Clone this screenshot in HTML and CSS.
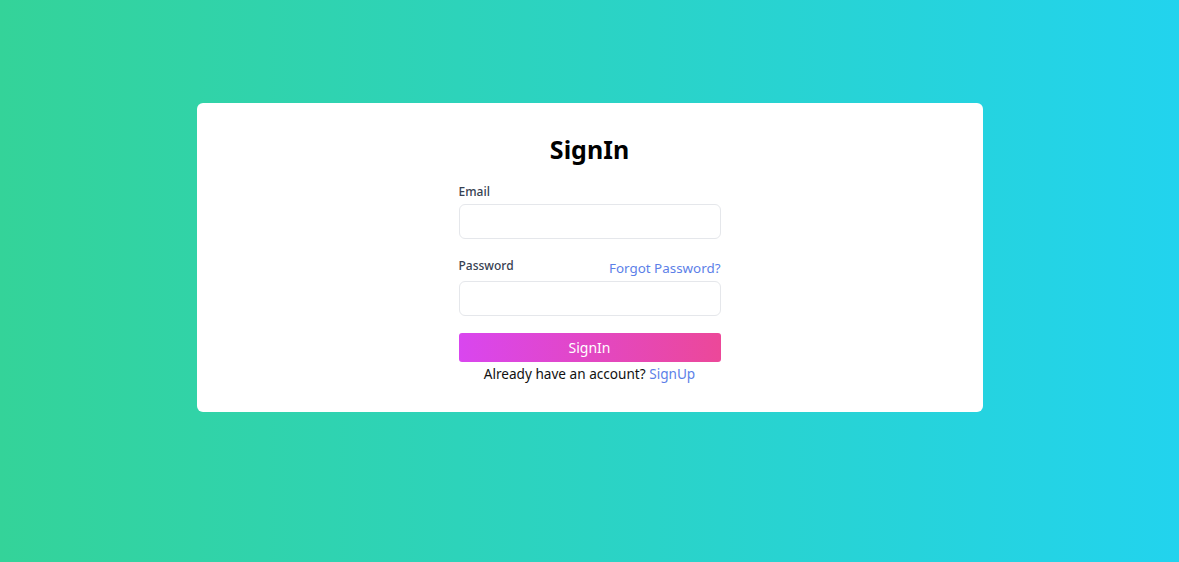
FILE: index.html
```html
<!DOCTYPE html>
<html lang="en">
<head>
<meta charset="utf-8">
<title>SignIn</title>
<link rel="stylesheet" href="styles.css">
</head>
<body>
<main class="page">
  <section class="card">
    <form class="form">
      <h1 class="title">SignIn</h1>
      <label class="label" for="email">Email</label>
      <input class="input" id="email" type="email">
      <div class="row">
        <label class="label" for="password">Password</label>
        <a class="link forgot" href="#">Forgot Password?</a>
      </div>
      <input class="input" id="password" type="password">
      <button class="btn" type="button">SignIn</button>
      <p class="foot">Already have an account? <a class="link" href="#">SignUp</a></p>
    </form>
  </section>
</main>
</body>
</html>
```
FILE: styles.css
```css
* { box-sizing: border-box; }
html, body { margin: 0; height: 100%; }
body {
  font-family: "Noto Sans", "Open Sans", sans-serif;
  color: #111;
}
.page {
  height: 562px;
  background: linear-gradient(to right, #34d399, #22d3ee);
  display: flex;
  justify-content: center;
  padding-top: 103px;
}
.card {
  width: 786px;
  height: 309px;
  background: #fff;
  border-radius: 6px;
  display: flex;
  justify-content: center;
  padding-top: 30px;
}
.form {
  width: 262px;
  display: flex;
  flex-direction: column;
}
.title {
  margin: 0 0 17px;
  text-align: center;
  font-size: 25px;
  line-height: 32px;
  font-weight: 700;
  color: #000;
}
.label {
  font-size: 12px;
  font-weight: 500;
  line-height: 20px;
  color: #374151;
}
.input {
  margin-top: 2px;
  height: 35px;
  border: 1.5px solid #e5e7eb;
  border-radius: 6px;
  background: #fff;
  font: inherit;
}
.row {
  margin-top: 18px;
  display: flex;
  justify-content: space-between;
  align-items: flex-end;
}
.row .label { line-height: 18px; }
.link {
  color: #5c7fe8;
  text-decoration: none;
  font-size: 13.6px;
}
.forgot { line-height: 22px; margin-bottom: -4px; font-size: 13.4px; }
.row + .input { margin-top: 6px; }
.btn {
  margin-top: 17px;
  height: 29px;
  border: 0;
  border-radius: 3px;
  background: linear-gradient(to right, #d946ef, #ec4899);
  color: #fff;
  font: inherit;
  font-size: 14px;
}
.foot {
  margin: 2px 0 0;
  text-align: center;
  font-size: 13.6px;
  line-height: 20px;
  color: #111;
}
```
